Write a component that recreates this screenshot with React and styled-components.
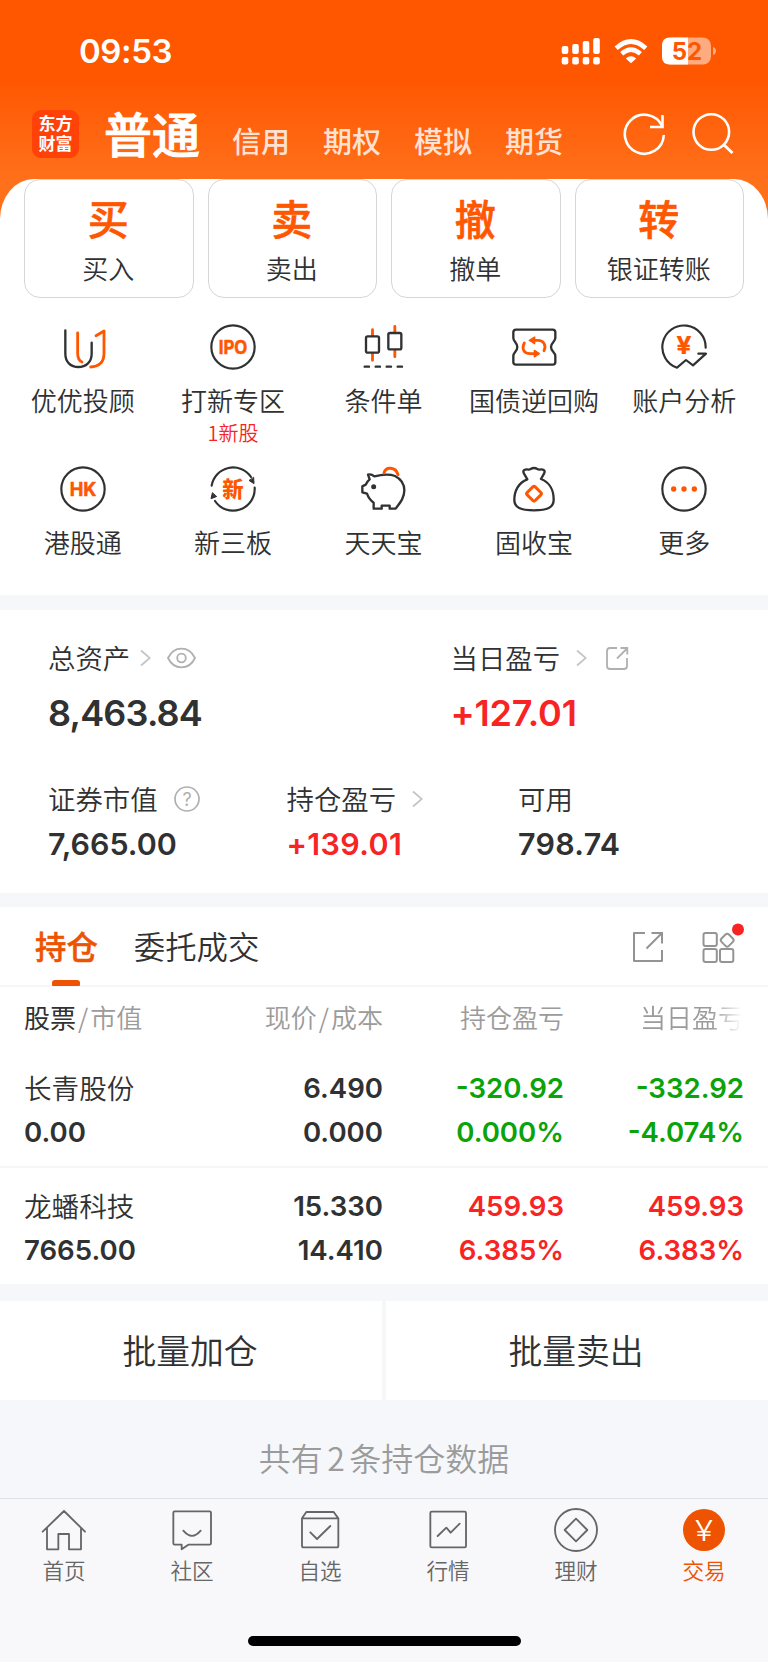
import React from "react";
import styled, { createGlobalStyle } from "styled-components";

const ORANGE = "#ff5600";
const DEEP = "#ed5300";
const DARK = "#303132";
const RED = "#f82323";
const GREEN = "#0aa30a";

const GlobalStyle = createGlobalStyle`
  * {
    box-sizing: border-box;
  }
  body {
    margin: 0;
    background: #fff;
    color: ${DARK};
    font-family: "Noto Sans CJK SC", sans-serif;
    font-weight: 350;
  }
  svg {
    display: block;
    flex: none;
  }
`;

const Page = styled.div`
  width: 768px;
  height: 1663px;
  overflow: hidden;
  background: #fff;
`;

const Hero = styled.div`
  height: 595px;
  background: linear-gradient(${ORANGE} 75px, #ff701b 180px);
`;

const StatusBar = styled.div`
  height: 102px;
  padding: 0 51px 0 79px;
  display: flex;
  justify-content: space-between;
  align-items: center;
`;

const Time = styled.div`
  color: #fff;
  font-family: Inter, sans-serif;
  font-size: 33px;
  font-weight: 600;
  letter-spacing: -0.4px;
`;

const TitleBar = styled.div`
  height: 77px;
  padding: 0 33px 0 32px;
  display: flex;
  align-items: flex-start;
`;

const Logo = styled.div`
  width: 47px;
  height: 48px;
  margin-top: 8px;
  padding-top: 3px;
  border-radius: 9px;
  background: #ff4208;
  color: #fff;
  font-size: 17px;
  font-weight: 700;
  line-height: 20px;
  text-align: center;
`;

const MainTitle = styled.div`
  margin-left: 25px;
  color: #fff;
  font-size: 48px;
  font-weight: 500;
  line-height: 60px;
  -webkit-text-stroke: 0.9px #fff;
`;

const SubTitle = styled.div`
  width: 59px;
  margin-left: 32px;
  margin-top: 18px;
  color: rgba(255, 255, 255, 0.82);
  font-size: 29px;
  font-weight: 500;
  line-height: 40px;
  white-space: nowrap;
`;

const TitleIcons = styled.div`
  margin-left: auto;
  margin-top: 8px;
  display: flex;
  gap: 24px;
`;

const Panel = styled.div`
  height: 416px;
  background: #fff;
  border-radius: 34px 34px 0 0 / 40px 40px 0 0;
`;

const Actions = styled.div`
  padding: 0 24px;
  display: grid;
  grid-template-columns: repeat(4, 1fr);
  gap: 14px;
`;

const Action = styled.div`
  height: 119px;
  padding-right: 1px;
  border: 1px solid #d6d6d6;
  border-radius: 16px;
  display: flex;
  flex-direction: column;
  align-items: center;
`;

const ActionGlyph = styled.div`
  margin-top: 11px;
  color: ${ORANGE};
  font-size: 41px;
  font-weight: 500;
  line-height: 52px;
  -webkit-text-stroke: 0.6px ${ORANGE};
`;

const ActionLabel = styled.div`
  margin-top: 7px;
  font-size: 26px;
  line-height: 36px;
`;

const Shortcuts = styled.div`
  padding: 25px 8.5px 0 7.5px;
  display: grid;
  grid-template-columns: repeat(5, 1fr);
  grid-auto-rows: 142px;
`;

const Shortcut = styled.div`
  display: flex;
  flex-direction: column;
  align-items: center;
  white-space: nowrap;
`;

const ShortcutLabel = styled.div`
  margin-top: 11px;
  font-size: 26px;
  line-height: 36px;
`;

const ShortcutNote = styled.div`
  color: ${RED};
  font-size: 20px;
  line-height: 29px;
`;

const Gap = styled.div`
  height: ${(props) => props.$height}px;
  background: #f6f7fa;
`;

const Assets = styled.div`
  height: 283px;
  padding: 28px 48px 0;
`;

const AssetRow = styled.div`
  display: grid;
  grid-template-columns: ${(props) => props.$columns};
  margin-bottom: ${(props) => props.$space || 0}px;
`;

const AssetLabel = styled.div`
  height: 38px;
  display: flex;
  align-items: center;
  font-size: 27.4px;
  line-height: 38px;

  svg {
    margin-top: 2px;
  }
`;

const AssetValue = styled.div`
  margin-top: ${(props) => (props.$big ? 16 : 6)}px;
  height: 42px;
  color: ${(props) => (props.$up ? RED : DARK)};
  font-family: Inter, sans-serif;
  font-size: ${(props) => (props.$big ? 36 : 30.4)}px;
  font-weight: 600;
  line-height: 42px;
  letter-spacing: ${(props) => props.$spacing || 0}px;
`;

const Tabs = styled.div`
  height: 80px;
  padding: 0 24px 0 35px;
  border-bottom: 2px solid #f6f6f8;
  display: flex;
`;

const Tab = styled.div`
  height: 79px;
  margin-right: 36px;
  padding-top: 17px;
  color: ${(props) => (props.$active ? DEEP : DARK)};
  font-size: 31.4px;
  font-weight: ${(props) => (props.$active ? 500 : 350)};
  line-height: 44px;
  display: flex;
  flex-direction: column;
  align-items: center;
  -webkit-text-stroke: ${(props) => (props.$active ? 0.5 : 0)}px ${DEEP};
`;

const Indicator = styled.div`
  width: 28px;
  height: 6px;
  margin-top: 12px;
  border-radius: 3px 3px 1px 1px;
  background: ${DEEP};
`;

const TabIcons = styled.div`
  margin: 15px 0 0 auto;
  display: flex;
  gap: 30px;
`;

const Columns = styled.div`
  display: grid;
  grid-template-columns: 170px 189px 181px 180px;
  padding: 0 24px;
`;

const TableHead = styled(Columns)`
  height: 61px;
  padding-top: 11px;
  color: #9b9b9b;
  font-size: 26px;
  line-height: 38px;
  white-space: nowrap;

  b {
    color: ${DARK};
    font-weight: 400;
  }
  i {
    font-style: normal;
    margin: 0 2px;
  }
`;

const HeadCell = styled.div`
  text-align: ${(props) => (props.$left ? "left" : "right")};
  mask-image: ${(props) =>
    props.$fade ? "linear-gradient(90deg, #000 148px, transparent 178px)" : "none"};
`;

const Holding = styled(Columns)`
  height: ${(props) => (props.$last ? 116 : 120)}px;
  padding-top: ${(props) => (props.$last ? 16 : 18)}px;
  border-bottom: ${(props) => (props.$last ? "none" : "2px solid #f6f6f8")};
`;

const Cell = styled.div`
  color: ${(props) => props.$color || DARK};
  font-family: Inter, sans-serif;
  font-size: 27.6px;
  font-weight: 600;
  line-height: 44px;
  text-align: ${(props) => (props.$left ? "left" : "right")};
`;

const StockName = styled.div`
  height: 44px;
  font-family: "Noto Sans CJK SC", sans-serif;
  font-size: 27.6px;
  font-weight: 350;
  line-height: 42px;
`;

const Batch = styled.div`
  height: 99px;
  background: #f6f7fa;
  display: grid;
  grid-template-columns: 382px 382px;
  gap: 4px;
`;

const BatchButton = styled.div`
  background: #fff;
  padding-right: 2px;
  font-size: 33.8px;
  line-height: 97px;
  text-align: center;
`;

const Summary = styled.div`
  height: 98px;
  padding-top: 34px;
  background: #f6f7fa;
  color: #9b9b9b;
  font-size: 32px;
  line-height: 46px;
  text-align: center;

  span {
    margin: 0 4.5px;
  }
`;

const Nav = styled.div`
  height: 164px;
  padding-top: 7px;
  border-top: 1px solid #dfe0e3;
  background: #f8f8fb;
  display: grid;
  grid-template-columns: repeat(6, 1fr);
  grid-template-rows: 130px 10px;
`;

const NavItem = styled.div`
  color: ${(props) => (props.$active ? DEEP : "#666")};
  font-size: 21.6px;
  line-height: 30px;
  display: flex;
  flex-direction: column;
  align-items: center;
`;

const NavLabel = styled.div`
  margin-top: 1px;
`;

const HomeBar = styled.div`
  grid-column: 1 / -1;
  justify-self: center;
  width: 273px;
  height: 10px;
  border-radius: 5px;
  background: #000;
`;

const Icon = ({ children, width = 6, color = DARK }) => (
  <svg
    width="48"
    height="48"
    viewBox="0 0 144 144"
    fill="none"
    stroke={color}
    strokeWidth={width}
    strokeLinecap="round"
    strokeLinejoin="round"
  >
    {children}
  </svg>
);

const IconText = ({
  children,
  size,
  y,
  length,
  weight = 700,
  color = ORANGE,
  outline = 0,
  family = "Inter",
}) => (
  <text
    x="72"
    y={y}
    textAnchor="middle"
    textLength={length}
    lengthAdjust="spacingAndGlyphs"
    fontFamily={`${family}, sans-serif`}
    fontSize={size}
    fontWeight={weight}
    fill={color}
    stroke={color}
    strokeWidth={outline}
  >
    {children}
  </text>
);

const StatusIcons = () => (
  <svg width="156" height="30" viewBox="0 0 156 30">
    <g fill="#fff">
      <rect x="0.7" y="10" width="6.6" height="8" rx="2" />
      <rect x="11.2" y="8" width="6.6" height="10" rx="2" />
      <rect x="21.7" y="5" width="6.6" height="13" rx="2" />
      <rect x="32.2" y="2" width="6.6" height="16" rx="2" />
      <rect x="0.7" y="21" width="6.6" height="7.5" rx="2" />
      <rect x="11.2" y="21" width="6.6" height="7.5" rx="2" />
      <rect x="21.7" y="21" width="6.6" height="7.5" rx="2" />
      <rect x="32.2" y="21" width="6.6" height="7.5" rx="2" />
      <path d="M64.8 22.5 Q70 18.2 75.2 22.5 L70 27.3 Z" />
    </g>
    <g fill="none" stroke="#fff" strokeWidth="4.6">
      <path d="M55.2 12.2 Q70 -1.2 84.8 12.2" />
      <path d="M60.6 17.8 Q70 9.4 79.4 17.8" />
    </g>
    <rect x="101" y="1.5" width="49" height="27" rx="8" fill="#ffab80" />
    <path d="M127 1.5 V28.5 H109 Q101 28.5 101 20.5 V9.5 Q101 1.5 109 1.5 Z" fill="#fff" />
    <path d="M152 11 Q155 12 155 15 T152 19 Z" fill="#ffab80" />
    <text
      x="126"
      y="23.5"
      textAnchor="middle"
      fontFamily="Inter, sans-serif"
      fontSize="24"
      fontWeight="700"
      fill={ORANGE}
    >
      52
    </text>
  </svg>
);

const RefreshIcon = () => (
  <svg width="44" height="48" viewBox="0 0 44 48" fill="none" stroke="#fff" strokeWidth="2.6">
    <path d="M40.8 25 A19.5 19.5 0 1 1 39 16" />
    <path d="M39.5 5 V17 H27" />
  </svg>
);

const SearchIcon = () => (
  <svg width="44" height="48" viewBox="0 0 44 48" fill="none" stroke="#fff" strokeWidth="2.6">
    <circle cx="20.3" cy="22" r="17.8" />
    <path d="M32.5 34.5 L41.5 43" strokeWidth="3" />
  </svg>
);

const ChevronWrap = styled.span`
  margin-left: ${(props) => props.$left}px;
`;

const Chevron = ({ left }) => (
  <ChevronWrap $left={left}>
    <svg width="11" height="18" viewBox="0 0 11 18" fill="none" stroke="#c4c4c4" strokeWidth="1.7">
      <path d="M1 1.5 L9.8 9 L1 16.5" />
    </svg>
  </ChevronWrap>
);

const SmallIcon = styled.svg`
  margin-left: ${(props) => props.$left}px;
`;

const EyeIcon = () => (
  <SmallIcon $left={16} width="29" height="22" viewBox="0 0 29 22" fill="none" stroke="#b0b0b0" strokeWidth="1.8">
    <path d="M1 11 C7 -1.5 22 -1.5 28 11 C22 23.5 7 23.5 1 11 Z" />
    <circle cx="14.5" cy="11" r="4.3" />
  </SmallIcon>
);

const HelpIcon = () => (
  <SmallIcon $left={16} width="26" height="26" viewBox="0 0 26 26" fill="none" stroke="#b0b0b0" strokeWidth="1.7">
    <circle cx="13" cy="13" r="12" />
    <text
      x="13"
      y="19.5"
      textAnchor="middle"
      fontFamily="Inter, sans-serif"
      fontSize="18"
      fontWeight="400"
      fill="#b0b0b0"
      stroke="none"
    >
      ?
    </text>
  </SmallIcon>
);

const ShareSmallIcon = () => (
  <SmallIcon
    $left={18}
    width="24"
    height="24"
    viewBox="0 0 24 24"
    fill="none"
    stroke="#b0b0b0"
    strokeWidth="1.8"
  >
    <path d="M12 2 H5 Q2 2 2 5 V20 Q2 23 5 23 H19 Q22 23 22 20 V12" />
    <path d="M12 12.5 L22 2.5 M15.5 2 H22.3 V8.5" />
  </SmallIcon>
);

const ShareIcon = () => (
  <svg width="36" height="48" viewBox="0 0 36 48" fill="none" stroke="#949494" strokeWidth="2">
    <path d="M15 11 H4 V39 H32 V28" strokeLinejoin="round" />
    <path d="M16.5 26.5 L31.5 11.5 M21.5 11 H32 V21.5" />
  </svg>
);

const AppsIcon = () => (
  <svg width="48" height="48" viewBox="0 0 48 48" fill="none" stroke="#949494" strokeWidth="2">
    <rect x="7.5" y="11" width="13.3" height="13" rx="2" />
    <rect x="7.5" y="27" width="13.3" height="13" rx="2" />
    <rect x="24" y="27" width="13.3" height="13" rx="2" />
    <rect x="26" y="13" width="10.4" height="10.4" rx="2.4" transform="rotate(45 31.2 18.2)" />
    <circle cx="42" cy="7.5" r="6" fill={RED} stroke="none" />
  </svg>
);

const shortcuts = [
  {
    label: "优优投顾",
    icon: (
      <Icon width={7}>
        <path d="M19 22 V92 C19 118 36 132 58 132 S98 118 98 92 V59" />
        <g stroke={ORANGE} strokeWidth="8.5">
          <path d="M56 30 V90 C56 105 62 114 69 117" />
          <path d="M111 38 L135 24 V92 C135 118 118 132 95 132" />
        </g>
      </Icon>
    ),
  },
  {
    label: "打新专区",
    note: "1新股",
    icon: (
      <Icon width={6.5}>
        <circle cx="72" cy="72" r="65" />
        <IconText size="55" y="92" length="86" outline={1.5}>
          IPO
        </IconText>
      </Icon>
    ),
  },
  {
    label: "条件单",
    icon: (
      <Icon width={7}>
        <g stroke={ORANGE} strokeWidth="8.5">
          <path d="M40.5 20 V112 M107.5 10 V101" />
        </g>
        <rect x="21" y="40" width="39" height="49" rx="5" fill="#fff" />
        <rect x="88" y="30" width="39" height="49" rx="5" fill="#fff" />
        <path d="M17 131 h13 m20 0 h13 m20 0 h13 m20 0 h13" />
      </Icon>
    ),
  },
  {
    label: "国债逆回购",
    icon: (
      <Icon width={7}>
        <path d="M18 20 H128 Q136 20 136 28 V45 C136 56 123 58 123 72 S136 88 136 99 V117 Q136 125 128 125 H18 Q10 125 10 117 V99 C10 88 22 86 22 72 S10 56 10 45 V28 Q10 20 18 20 Z" />
        <g stroke={ORANGE} strokeWidth="8.5">
          <path d="M102 83 C110 66 100 52 84 52 H68" />
          <path d="M43 60 C34 78 42 92 60 92 H76" />
        </g>
        <path
          d="M58 52 L74 42 V62 Z M88 92 L73 82 V102 Z"
          fill={ORANGE}
          stroke={ORANGE}
          strokeWidth="4"
        />
      </Icon>
    ),
  },
  {
    label: "账户分析",
    icon: (
      <Icon width={6.5}>
        <path d="M137 74 A65 65 0 1 0 51 134 L78 111 L99 127 L138 92 H115" />
        <IconText size="74" y="94" weight="700" length="46" outline={0.5}>
          ¥
        </IconText>
      </Icon>
    ),
  },
  {
    label: "港股通",
    icon: (
      <Icon width={6.5}>
        <circle cx="72" cy="72" r="65" />
        <IconText size="57" y="93" length="80" outline={1.5}>
          HK
        </IconText>
      </Icon>
    ),
  },
  {
    label: "新三板",
    icon: (
      <Icon width={6.5}>
        <path d="M8 62 A65 65 0 0 1 126 36" />
        <path d="M137 68 A65 65 0 0 1 18 108" />
        <path d="M134 38 L135 56 L121 47 Z M10 84 L6 101 L22 95 Z" fill={DARK} strokeWidth="3" />
        <IconText size="64" y="95" weight="900" family="'Noto Sans CJK SC'">
          新
        </IconText>
      </Icon>
    ),
  },
  {
    label: "天天宝",
    icon: (
      <Icon width={7}>
        <path
          d="M27 29 C34 27 40 29 46 34 C70 28 95 28 108 33 C126 42 136 58 136 76 C136 98 124 112 110 131 H92 V122 H68 V131 H44 V113 C34 106 28 98 24 86 L10 82 V64 L20 59 C23 52 27 47 32 43 Z"
          fill="#fff"
        />
        <circle cx="44" cy="65" r="7.5" fill={DARK} stroke="none" />
        <path d="M75 24 C80 4 110 4 117 29" stroke={ORANGE} strokeWidth="9" />
      </Icon>
    ),
  },
  {
    label: "固收宝",
    icon: (
      <Icon width={7}>
        <path d="M52 43 L42 26 C36 14 46 12 56 14 C61 15 63 9 72 9 S83 15 88 14 C98 12 108 14 102 26 L93 42 C120 52 131 78 131 104 C131 128 112 136 72 136 C32 136 13 128 13 104 C13 78 26 52 52 43 Z" />
        <rect
          x="55"
          y="69"
          width="34"
          height="34"
          rx="5"
          transform="rotate(45 72 86)"
          stroke={ORANGE}
          strokeWidth="9"
        />
      </Icon>
    ),
  },
  {
    label: "更多",
    icon: (
      <Icon width={6.5}>
        <circle cx="72" cy="72" r="65" />
        <g fill={ORANGE} stroke="none">
          <circle cx="41" cy="72" r="8" />
          <circle cx="72" cy="72" r="8" />
          <circle cx="103" cy="72" r="8" />
        </g>
      </Icon>
    ),
  },
];

const actions = [
  { glyph: "买", label: "买入" },
  { glyph: "卖", label: "卖出" },
  { glyph: "撤", label: "撤单" },
  { glyph: "转", label: "银证转账" },
];

const holdings = [
  {
    name: "长青股份",
    value: "0.00",
    price: ["6.490", "0.000"],
    total: ["-320.92", "0.000%"],
    today: ["-332.92", "-4.074%"],
    color: GREEN,
  },
  {
    name: "龙蟠科技",
    value: "7665.00",
    price: ["15.330", "14.410"],
    total: ["459.93", "6.385%"],
    today: ["459.93", "6.383%"],
    color: RED,
  },
];

const navItems = [
  {
    label: "首页",
    icon: (
      <path d="M8 77 L72 15 L135 77 M21 66 V130 H55 V84 H87 V130 H123 V66" />
    ),
  },
  {
    label: "社区",
    icon: (
      <>
        <path d="M61 116 H125 Q129 116 129 112 V20 Q129 16 125 16 H20 Q16 16 16 20 V112 Q16 116 20 116 H41 V130 Z" />
        <path d="M46 74 Q72 105 98 74" />
      </>
    ),
  },
  {
    label: "自选",
    icon: (
      <>
        <path d="M18 37 L31 18 H113 L127 37 V119 Q127 124 122 124 H23 Q18 124 18 119 Z M18 37 H127" />
        <path d="M43 79 L63 99 L103 60" />
      </>
    ),
  },
  {
    label: "行情",
    icon: (
      <>
        <rect x="19" y="17" width="107" height="107" rx="4" />
        <path d="M41 90 L67 65 L80 80 L107 53" />
      </>
    ),
  },
  {
    label: "理财",
    icon: (
      <>
        <circle cx="72" cy="72" r="63" />
        <path d="M72 38 L106 72 L72 106 L38 72 Z" />
      </>
    ),
  },
  {
    label: "交易",
    active: true,
    icon: (
      <>
        <circle cx="72" cy="72" r="63" fill={DEEP} stroke="none" />
        <IconText size="86" y="104" weight="350" color="#fff" length="54">
          ¥
        </IconText>
      </>
    ),
  },
];

const Pair = ({ values, color }) => (
  <Cell $color={color}>
    <div>{values[0]}</div>
    <div>{values[1]}</div>
  </Cell>
);

const App = () => {
  return (
    <Page>
      <GlobalStyle />
      <Hero>
        <StatusBar>
          <Time>09:53</Time>
          <StatusIcons />
        </StatusBar>
        <TitleBar>
          <Logo>
            东方
            <br />
            财富
          </Logo>
          <MainTitle>普通</MainTitle>
          <SubTitle>信用</SubTitle>
          <SubTitle>期权</SubTitle>
          <SubTitle>模拟</SubTitle>
          <SubTitle>期货</SubTitle>
          <TitleIcons>
            <RefreshIcon />
            <SearchIcon />
          </TitleIcons>
        </TitleBar>
        <Panel>
          <Actions>
            {actions.map((item) => (
              <Action key={item.label}>
                <ActionGlyph>{item.glyph}</ActionGlyph>
                <ActionLabel>{item.label}</ActionLabel>
              </Action>
            ))}
          </Actions>
          <Shortcuts>
            {shortcuts.map((item) => (
              <Shortcut key={item.label}>
                {item.icon}
                <ShortcutLabel>{item.label}</ShortcutLabel>
                {item.note && <ShortcutNote>{item.note}</ShortcutNote>}
              </Shortcut>
            ))}
          </Shortcuts>
        </Panel>
      </Hero>
      <Gap $height={15} />
      <Assets>
        <AssetRow $columns="402.5px 1fr" $space={45}>
          <div>
            <AssetLabel>
              总资产
              <Chevron left={10} />
              <EyeIcon />
            </AssetLabel>
            <AssetValue $big $spacing={-0.8}>
              8,463.84
            </AssetValue>
          </div>
          <div>
            <AssetLabel>
              当日盈亏
              <Chevron left={16} />
              <ShareSmallIcon />
            </AssetLabel>
            <AssetValue $big $up $spacing={-0.2}>
              +127.01
            </AssetValue>
          </div>
        </AssetRow>
        <AssetRow $columns="238.5px 231.5px 1fr">
          <div>
            <AssetLabel>
              证券市值
              <HelpIcon />
            </AssetLabel>
            <AssetValue>7,665.00</AssetValue>
          </div>
          <div>
            <AssetLabel>
              持仓盈亏
              <Chevron left={16} />
            </AssetLabel>
            <AssetValue $up $spacing={0.4}>
              +139.01
            </AssetValue>
          </div>
          <div>
            <AssetLabel>可用</AssetLabel>
            <AssetValue $spacing={0.3}>798.74</AssetValue>
          </div>
        </AssetRow>
      </Assets>
      <Gap $height={14} />
      <Tabs>
        <Tab $active>
          持仓
          <Indicator />
        </Tab>
        <Tab>委托成交</Tab>
        <TabIcons>
          <ShareIcon />
          <AppsIcon />
        </TabIcons>
      </Tabs>
      <TableHead>
        <HeadCell $left>
          <b>股票</b>
          <i>/</i>市值
        </HeadCell>
        <HeadCell>
          现价<i>/</i>成本
        </HeadCell>
        <HeadCell>持仓盈亏</HeadCell>
        <HeadCell $fade>当日盈亏</HeadCell>
      </TableHead>
      {holdings.map((item, index) => (
        <Holding key={item.name} $last={index === holdings.length - 1}>
          <Cell $left>
            <StockName>{item.name}</StockName>
            <div>{item.value}</div>
          </Cell>
          <Pair values={item.price} />
          <Pair values={item.total} color={item.color} />
          <Pair values={item.today} color={item.color} />
        </Holding>
      ))}
      <Gap $height={17} />
      <Batch>
        <BatchButton>批量加仓</BatchButton>
        <BatchButton>批量卖出</BatchButton>
      </Batch>
      <Summary>
        共有<span>2</span>条持仓数据
      </Summary>
      <Nav>
        {navItems.map((item) => (
          <NavItem key={item.label} $active={item.active}>
            <Icon width={5.5} color="#666">
              {item.icon}
            </Icon>
            <NavLabel>{item.label}</NavLabel>
          </NavItem>
        ))}
        <HomeBar />
      </Nav>
    </Page>
  );
};

export default App;
